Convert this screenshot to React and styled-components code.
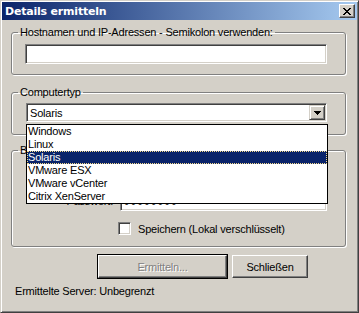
import React from 'react'
import styled, { createGlobalStyle } from 'styled-components'

const GlobalStyle = createGlobalStyle`
  html, body {
    margin: 0;
    padding: 0;
    background: #d4d0c8;
  }
  * {
    box-sizing: border-box;
  }
`

const hosts = ''
const types = ['Windows', 'Linux', 'Solaris', 'VMware ESX', 'VMware vCenter', 'Citrix XenServer']

function CloseGlyph() {
  return (
    <svg width="8" height="7" viewBox="0 0 8 7" shapeRendering="crispEdges">
      <path
        d="M0 0h2v1h-2zM6 0h2v1h-2zM1 1h2v1h-2zM5 1h2v1h-2zM2 2h4v1h-4zM3 3h2v1h-2zM2 4h4v1h-4zM1 5h2v1h-2zM5 5h2v1h-2zM0 6h2v1h-2zM6 6h2v1h-2z"
        fill="#000"
      />
    </svg>
  )
}

function ArrowGlyph() {
  return (
    <svg width="7" height="4" viewBox="0 0 7 4" shapeRendering="crispEdges">
      <path d="M0 0h7v1h-7zM1 1h5v1h-5zM2 2h3v1h-3zM3 3h1v1h-1z" fill="#000" />
    </svg>
  )
}

function App() {
  const selected = 'Solaris'
  return (
    <>
      <GlobalStyle />
      <Window>
        <TitleBar>
          <Title>Details ermitteln</Title>
          <CloseButton>
            <CloseGlyph />
          </CloseButton>
        </TitleBar>

        <Body>
          <Group>
            <Legend>Hostnamen und IP-Adressen - Semikolon verwenden:</Legend>
            <GroupInner $top={5} $bottom={10}>
              <TextBox $width={302}>{hosts}</TextBox>
            </GroupInner>
          </Group>

          <Group $gap={11}>
            <Legend>Computertyp</Legend>
            <GroupInner $top={4} $bottom={12}>
              <Combo>
                <ComboValue>{selected}</ComboValue>
                <DropButton>
                  <ArrowGlyph />
                </DropButton>
                <DropList>
                  {types.map((t) => (
                    <DropItem key={t} $active={t === selected}>
                      {t}
                    </DropItem>
                  ))}
                </DropList>
              </Combo>
            </GroupInner>
          </Group>

          <Group $gap={9} $back>
            <Legend>B</Legend>
            <GroupInner $top={10} $bottom={11}>
              <FieldRow>
                <FieldLabel />
                <TextBox $width={207} />
              </FieldRow>
              <FieldRow $top={4}>
                <FieldLabel>Passwort:</FieldLabel>
                <TextBox $width={207}>
                  <Dots>●●●●●●●●</Dots>
                </TextBox>
              </FieldRow>
              <CheckRow>
                <CheckBox />
                <span>Speichern (Lokal verschlüsselt)</span>
              </CheckRow>
            </GroupInner>
          </Group>

          <ButtonRow>
            <Button $width={129} $isDefault disabled>
              Ermitteln...
            </Button>
            <Button $width={76}>Schließen</Button>
          </ButtonRow>

          <Status>Ermittelte Server: Unbegrenzt</Status>
        </Body>
      </Window>
    </>
  )
}

export default App

const Window = styled.div`
  width: 359px;
  height: 313px;
  background: #d4d0c8;
  border: 1px solid;
  border-color: #d4d0c8 #404040 #404040 #d4d0c8;
  box-shadow: inset 1px 1px 0 #fff, inset -1px -1px 0 #808080;
  padding: 1px;
  display: flex;
  flex-direction: column;
  font-family: "Liberation Sans", Arial, sans-serif;
  font-size: 11px;
  letter-spacing: -0.2px;
  color: #000;
`

const TitleBar = styled.div`
  height: 18px;
  flex: none;
  display: flex;
  align-items: center;
  justify-content: space-between;
  padding: 0 2px 0 3px;
  background: linear-gradient(to right, #0a246a, #a6caf0);
`

const Title = styled.div`
  color: #fff;
  font-family: "DejaVu Sans", Verdana, sans-serif;
  font-weight: bold;
  font-size: 11px;
  letter-spacing: -0.2px;
`

const CloseButton = styled.div`
  width: 16px;
  height: 14px;
  display: flex;
  align-items: center;
  justify-content: center;
  background: #d4d0c8;
  border: 1px solid;
  border-color: #fff #404040 #404040 #fff;
  box-shadow: inset -1px -1px 0 #808080;
`

const Body = styled.div`
  display: flex;
  flex-direction: column;
  padding: 0 0 0 9px;
`

const Group = styled.fieldset`
  width: 335px;
  margin: ${(p) => (p.$gap ? p.$gap : 6)}px 0 0 0;
  padding: 0;
  border: 1px solid #808080;
  border-radius: 3px;
  box-shadow: 1px 1px 0 #fff, inset 1px 1px 0 #fff;
  position: relative;
  z-index: ${(p) => (p.$back ? 0 : 1)};
`

const Legend = styled.legend`
  margin-left: 6px;
  padding: 0 2px;
  line-height: 13px;
  height: 13px;
  font-size: 11px;
`

const GroupInner = styled.div`
  padding: ${(p) => p.$top}px 0 ${(p) => p.$bottom}px 13px;
`

const TextBox = styled.div`
  width: ${(p) => p.$width}px;
  height: 20px;
  background: #fff;
  border: 1px solid;
  border-color: #808080 #fff #fff #808080;
  box-shadow: inset 1px 1px 0 #404040, inset -1px -1px 0 #d4d0c8;
  padding: 0 3px;
  display: flex;
  align-items: center;
  overflow: hidden;
`

const Combo = styled.div`
  position: relative;
  width: 301px;
  height: 19px;
  margin-left: 1px;
  background: #fff;
  border: 1px solid;
  border-color: #808080 #fff #fff #808080;
  box-shadow: inset 1px 1px 0 #404040, inset -1px -1px 0 #d4d0c8;
  display: flex;
  align-items: center;
  padding: 1px 1px 1px 3px;
`

const ComboValue = styled.div`
  flex: 1;
`

const DropButton = styled.div`
  width: 16px;
  height: 15px;
  display: flex;
  align-items: center;
  justify-content: center;
  background: #d4d0c8;
  border: 1px solid;
  border-color: #d4d0c8 #404040 #404040 #d4d0c8;
  box-shadow: inset 1px 1px 0 #fff, inset -1px -1px 0 #808080;
`

const DropList = styled.div`
  position: absolute;
  left: -1px;
  top: 20px;
  width: 302px;
  background: #fff;
  border: 1px solid #000;
  display: flex;
  flex-direction: column;
  z-index: 5;
`

const DropItem = styled.div`
  height: 13px;
  line-height: 13px;
  padding-left: 1px;
  background: ${(p) => (p.$active ? '#0a246a' : '#fff')};
  color: ${(p) => (p.$active ? '#fff' : '#000')};
  outline: ${(p) => (p.$active ? '1px dotted #f5db8b' : 'none')};
  outline-offset: -1px;
`

const FieldRow = styled.div`
  display: flex;
  align-items: center;
  gap: 7px;
  margin-top: ${(p) => p.$top || 0}px;
`

const FieldLabel = styled.div`
  width: 88px;
  text-align: right;
`

const Dots = styled.span`
  font-family: "DejaVu Sans", sans-serif;
  font-size: 6px;
  letter-spacing: 1.5px;
`

const CheckRow = styled.div`
  display: flex;
  align-items: center;
  gap: 7px;
  margin: 11px 0 0 93px;
  height: 13px;
`

const CheckBox = styled.div`
  width: 13px;
  height: 13px;
  background: #fff;
  border: 1px solid;
  border-color: #808080 #fff #fff #808080;
  box-shadow: inset 1px 1px 0 #404040, inset -1px -1px 0 #d4d0c8;
`

const ButtonRow = styled.div`
  display: flex;
  gap: 5px;
  margin: 8px 0 0 87px;
`

const Button = styled.button`
  width: ${(p) => p.$width}px;
  height: 23px;
  padding: 0;
  font-family: inherit;
  font-size: 11px;
  letter-spacing: inherit;
  background: #d4d0c8;
  color: #000;
  border: 1px solid;
  border-color: #fff #404040 #404040 #fff;
  box-shadow: inset -1px -1px 0 #808080, inset 1px 1px 0 #d4d0c8;
  outline: ${(p) => (p.$isDefault ? '1px solid #000' : 'none')};
  outline-offset: 0;

  &:disabled {
    color: #808080;
    text-shadow: 1px 1px 0 #fff;
  }
`

const Status = styled.div`
  margin: 7px 0 0 4px;
  line-height: 13px;
`
